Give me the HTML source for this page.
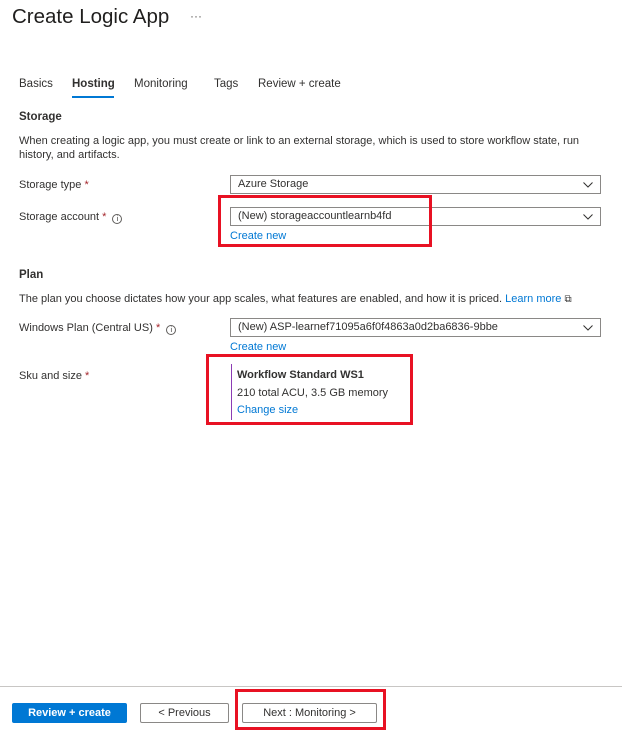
<!DOCTYPE html>
<html><head><style>
*{margin:0;padding:0;box-sizing:border-box}
body{width:622px;height:738px;background:#fff;font-family:"Liberation Sans",sans-serif;color:#323130;position:relative;overflow:hidden;font-size:11px}
.a{position:absolute;white-space:nowrap}
.dd{position:absolute;border:1px solid #8a8886;height:19px;padding:0 0 0 7px;line-height:17px;font-size:11px}
.dd svg{position:absolute;right:7px;top:6px}
.lnk{color:#0078d4}
.req{color:#a4262c}
.info{display:inline-block;width:10px;height:10px;border:1px solid #605e5c;border-radius:50%;font-size:7px;text-align:center;line-height:9px;vertical-align:-1px;margin-left:6px}
.red{position:absolute;border:3px solid #e81123}
.btn{position:absolute;height:20px;font-size:11px;text-align:center;line-height:18px;border:1px solid #8a8886;border-radius:2px}
</style></head><body>
<div class="a" style="left:12px;top:5px;font-size:20.5px;color:#201f1e">Create Logic App</div>
<div class="a" style="left:190px;top:9px;font-size:12px;color:#605e5c">···</div>
<div class="a" style="left:19px;top:78px;font-size:11.5px">Basics</div>
<div class="a" style="left:72px;top:78px;font-size:11.5px;font-weight:bold">Hosting</div>
<div class="a" style="left:72px;top:96px;width:42px;height:2px;background:#0078d4"></div>
<div class="a" style="left:134px;top:78px;font-size:11.5px">Monitoring</div>
<div class="a" style="left:214px;top:78px;font-size:11.5px">Tags</div>
<div class="a" style="left:258px;top:78px;font-size:11.5px">Review + create</div>
<div class="a" style="left:19px;top:111px;font-size:11.5px;font-weight:bold">Storage</div>
<div class="a" style="left:19px;top:135px">When creating a logic app, you must create or link to an external storage, which is used to store workflow state, run</div>
<div class="a" style="left:19px;top:149px">history, and artifacts.</div>
<div class="a" style="left:19px;top:179px">Storage type <span class="req">*</span></div>
<div class="dd" style="left:230px;top:175px;width:371px">Azure Storage<svg width="10" height="6"><path d="M0.5 0.5L5 5L9.5 0.5" stroke="#323130" fill="none"/></svg></div>
<div class="a" style="left:19px;top:211px">Storage account <span class="req">*</span><span class="info">i</span></div>
<div class="dd" style="left:230px;top:207px;width:371px">(New) storageaccountlearnb4fd<svg width="10" height="6"><path d="M0.5 0.5L5 5L9.5 0.5" stroke="#323130" fill="none"/></svg></div>
<div class="a lnk" style="left:230px;top:230px">Create new</div>
<div class="red" style="left:218px;top:195px;width:214px;height:52px"></div>
<div class="a" style="left:19px;top:269px;font-size:11.5px;font-weight:bold">Plan</div>
<div class="a" style="left:19px;top:293px">The plan you choose dictates how your app scales, what features are enabled, and how it is priced. <span class="lnk">Learn more</span> <span style="font-size:10px">⧉</span></div>
<div class="a" style="left:19px;top:322px">Windows Plan (Central US) <span class="req">*</span><span class="info">i</span></div>
<div class="dd" style="left:230px;top:318px;width:371px">(New) ASP-learnef71095a6f0f4863a0d2ba6836-9bbe<svg width="10" height="6"><path d="M0.5 0.5L5 5L9.5 0.5" stroke="#323130" fill="none"/></svg></div>
<div class="a lnk" style="left:230px;top:341px">Create new</div>
<div class="a" style="left:19px;top:370px">Sku and size <span class="req">*</span></div>
<div class="a" style="left:231px;top:364px;width:1px;height:56px;background:#8c3cb4"></div>
<div class="a" style="left:237px;top:369px;font-weight:bold">Workflow Standard WS1</div>
<div class="a" style="left:237px;top:387px">210 total ACU, 3.5 GB memory</div>
<div class="a lnk" style="left:237px;top:404px">Change size</div>
<div class="red" style="left:206px;top:354px;width:207px;height:71px"></div>
<div class="a" style="left:0;top:686px;width:622px;height:1px;background:#c8c6c4"></div>
<div class="btn" style="left:12px;top:703px;width:115px;background:#0078d4;border-color:#0078d4;color:#fff;font-weight:bold">Review + create</div>
<div class="btn" style="left:140px;top:703px;width:89px">&lt; Previous</div>
<div class="btn" style="left:242px;top:703px;width:135px">Next : Monitoring &gt;</div>
<div class="red" style="left:235px;top:689px;width:151px;height:41px"></div>
</body></html>
